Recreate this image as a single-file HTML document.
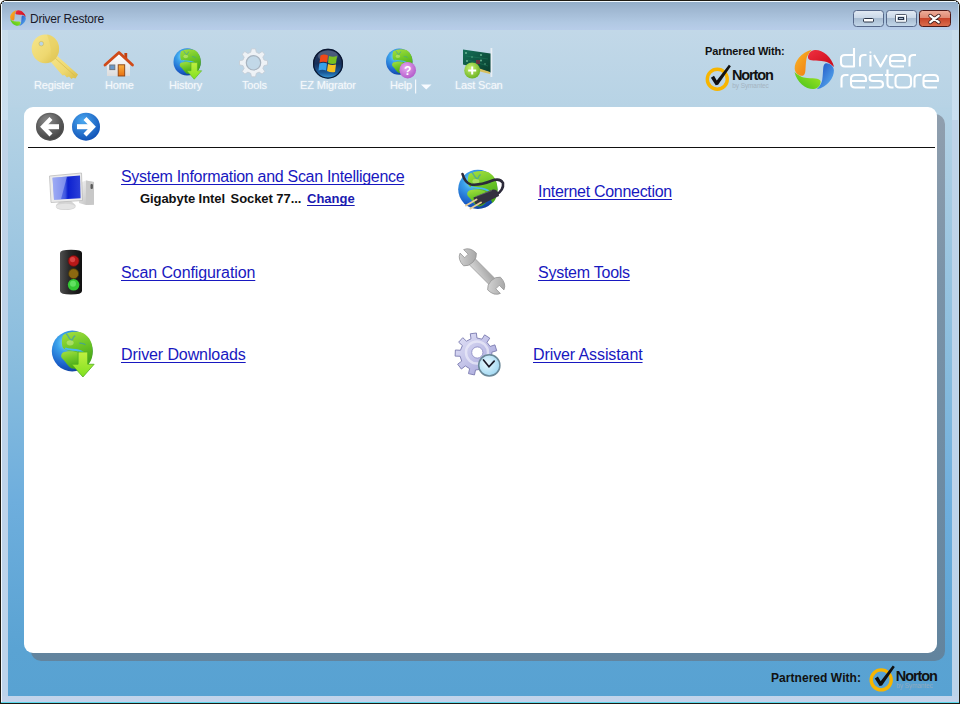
<!DOCTYPE html>
<html><head><meta charset="utf-8">
<style>
*{margin:0;padding:0;box-sizing:border-box}
html,body{width:960px;height:704px;overflow:hidden;background:#fff}
body{position:relative;font-family:"Liberation Sans",sans-serif}
.abs{position:absolute}
#win{position:absolute;left:0;top:0;width:960px;height:704px;background:#1e1a12;border-radius:6px 6px 0 0}
#wtop{position:absolute;left:4px;top:1px;width:952px;height:1px;background:#f2faff}
#wl{position:absolute;left:1px;top:4px;width:1px;height:698px;background:#f0f8fe}
#wr{position:absolute;left:958px;top:4px;width:1px;height:698px;background:#c4dbec}
#wb{position:absolute;left:1px;top:702px;width:958px;height:1px;background:#5ad8ec}
#title{position:absolute;left:2px;top:2px;width:956px;height:28px;background:linear-gradient(#93aec9,#9eb6d0 22%,#b0c8e2 72%,#b8cde9)}
#tool{position:absolute;left:2px;top:30px;width:956px;height:77px;background:linear-gradient(#c2d8e8,#b7d3e5)}
#lower{position:absolute;left:2px;top:107px;width:956px;height:589px;background:linear-gradient(#b6d3e5 0%,#86bbdd 46%,#6eaedd 67%,#5aa3d3 92%,#58a2d2 100%)}
.frameL{position:absolute;left:2px;top:120px;width:6px;height:576px;background:linear-gradient(#bfd3e8,#bcd3ea)}
.frameR{position:absolute;left:952px;top:120px;width:6px;height:576px;background:linear-gradient(#bfd3e8,#bcd3ea)}
.frameTL{position:absolute;left:2px;top:30px;width:6px;height:90px;background:linear-gradient(#c8dcea,#cadff0)}
.frameTR{position:absolute;left:952px;top:30px;width:6px;height:90px;background:linear-gradient(#c8dcea,#cadff0)}
.frameB{position:absolute;left:2px;top:696px;width:956px;height:6px;background:linear-gradient(#c0d4ea,#c4d2ec)}
#panelShadow{position:absolute;left:31px;top:114px;width:914px;height:547px;background:linear-gradient(#909fae,#7a93a8 30%,#62849e);border-radius:10px}
#panel{position:absolute;left:24px;top:107px;width:913px;height:546px;background:#fff;border-radius:9px}
.sep{position:absolute;left:28px;top:147px;width:907px;height:1px;background:#111}
.lbl{position:absolute;font-size:11px;color:#f6f9fc;letter-spacing:-0.15px;white-space:nowrap;text-shadow:0 0 2px rgba(255,255,255,.5)}
.link{position:absolute;font-size:16px;color:#1818c0;text-decoration-color:#1010ee;text-decoration:underline;text-decoration-skip-ink:none;text-underline-offset:2px;text-decoration-thickness:1px;letter-spacing:-0.25px;white-space:nowrap;line-height:18px}
</style></head><body>
<div id="win"></div>
<div id="title"></div>
<div id="wtop"></div><div id="wl"></div><div id="wr"></div><div id="wb"></div>
<div id="tool"></div>
<div id="lower"></div>
<div class="frameL"></div>
<div class="frameR"></div>
<div class="frameB"></div>
<div class="frameTL"></div><div class="frameTR"></div>
<div id="panelShadow"></div>
<div id="panel"></div>
<div class="sep"></div>

<!-- title -->
<div class="abs" style="left:30px;top:12px;font-size:12px;color:#1a1a2a;letter-spacing:-0.25px">Driver Restore</div>

<!-- toolbar labels -->
<div class="lbl" style="left:34px;top:79px">Register</div>
<div class="lbl" style="left:105px;top:79px">Home</div>
<div class="lbl" style="left:169px;top:79px">History</div>
<div class="lbl" style="left:242px;top:79px">Tools</div>
<div class="lbl" style="left:300px;top:79px">EZ Migrator</div>
<div class="lbl" style="left:390px;top:79px">Help</div>
<div class="lbl" style="left:455px;top:79px">Last Scan</div>

<!-- links -->
<div class="link" style="left:121px;top:168px;letter-spacing:-0.3px">System Information and Scan Intelligence</div>
<div class="abs" style="left:140px;top:191px;font-size:13px;font-weight:bold;color:#111;white-space:pre;letter-spacing:-0.07px">Gigabyte Intel<span style="margin-left:5.6px">Socket 77...</span></div>
<div class="abs" style="left:307px;top:191px;font-size:13px;font-weight:bold;color:#1a1ab0;text-decoration:underline;text-decoration-skip-ink:none;text-underline-offset:2px;letter-spacing:0px">Change</div>
<div class="link" style="left:538px;top:183px;letter-spacing:-0.3px">Internet Connection</div>
<div class="link" style="left:121px;top:264px;letter-spacing:-0.1px">Scan Configuration</div>
<div class="link" style="left:538px;top:264px">System Tools</div>
<div class="link" style="left:121px;top:346px;letter-spacing:-0.1px">Driver Downloads</div>
<div class="link" style="left:533px;top:346px;letter-spacing:-0.1px">Driver Assistant</div>

<!-- partnered -->
<div class="abs" style="left:705px;top:45px;font-size:11px;font-weight:bold;color:#111;letter-spacing:-0.15px">Partnered With:</div>
<div class="abs" style="left:771px;top:671px;font-size:12px;font-weight:bold;color:#111;letter-spacing:0.05px">Partnered With:</div>
<svg id="ov" width="960" height="704" viewBox="0 0 960 704" style="position:absolute;left:0;top:0">
<defs>
  <linearGradient id="gRed" x1="0" y1="0" x2="1" y2="1"><stop offset="0" stop-color="#f03040"/><stop offset="1" stop-color="#c80818"/></linearGradient>
  <linearGradient id="gBlue" x1="1" y1="0" x2="0" y2="1"><stop offset="0" stop-color="#60b8f4"/><stop offset="1" stop-color="#1848c0"/></linearGradient>
  <linearGradient id="gGreen" x1="1" y1="0" x2="0" y2="1"><stop offset="0" stop-color="#40c020"/><stop offset="1" stop-color="#a8e820"/></linearGradient>
  <linearGradient id="gOrange" x1="0" y1="1" x2="1" y2="0"><stop offset="0" stop-color="#f07810"/><stop offset="1" stop-color="#f8b828"/></linearGradient>
  <path id="petal" d="M-6.3,-11.5 C-6.5,-16 -3.5,-19.3 0.7,-19.6 C8,-20 17.5,-13 19.8,-2.5 C16,-6 13,-7.5 10.4,-7.9 C6,-8.6 2,-8.6 -1,-8.9 C-3.5,-9.1 -5.5,-9.6 -6.3,-11.5 Z"/>
  <g id="logo">
    <use href="#petal" fill="url(#gRed)"/>
    <use href="#petal" fill="url(#gBlue)" transform="rotate(90)"/>
    <use href="#petal" fill="url(#gGreen)" transform="rotate(180)"/>
    <use href="#petal" fill="url(#gOrange)" transform="rotate(270)"/>
  </g>
  <radialGradient id="gOcean" cx="0.35" cy="0.3" r="0.75"><stop offset="0" stop-color="#80e0ff"/><stop offset="0.3" stop-color="#3aa0ea"/><stop offset="0.75" stop-color="#1a5ec8"/><stop offset="1" stop-color="#10409a"/></radialGradient>
  <linearGradient id="gLand" x1="0" y1="0" x2="0.3" y2="1"><stop offset="0" stop-color="#a8e040"/><stop offset="0.5" stop-color="#70c828"/><stop offset="1" stop-color="#48a818"/></linearGradient>
  <g id="globe">
    <circle cx="20" cy="20" r="20" fill="url(#gOcean)"/>
    <path d="M11,4.5 C15,1.5 24,0 31,2.5 C37,6 40,12 40.2,20 C40,26 38.5,31 35,34 L31,26 C28,22 24,21 20,20.5 C16,20 13,18.5 11,17 C9.5,14 9.5,8 11,4.5 Z" fill="url(#gLand)"/>
    <path d="M12,21 C16,19.5 23,20 27,22 C30,24 31,28 29,32 C27,36 23,38.5 19,37 C16,35 14,31 11,28 C8,26 9,22 12,21 Z" fill="url(#gLand)"/>
    <path d="M14,3 C17,5 16,8 19,9 C21,10 20,6 23,5" stroke="#2a88d8" stroke-width="1.4" fill="none" opacity="0.55"/>
    <path d="M27,12 C29,13 31,12 33,14" stroke="#2a88d8" stroke-width="1.2" fill="none" opacity="0.5"/>
    <path d="M13,17.5 C17,19 22,18.5 26,19.5 C28,20 30,21 31,21.5" stroke="#48b8f0" stroke-width="1.8" fill="none"/>
    <ellipse cx="18" cy="12" rx="3.5" ry="2.5" fill="#f8ffc0" opacity="0.35"/>
  </g>
  <linearGradient id="gArrow" x1="0" y1="0" x2="0" y2="1"><stop offset="0" stop-color="#c0f040"/><stop offset="1" stop-color="#80e020"/></linearGradient>
  <path id="dlArrow" d="M25.8,21 L35.2,21 L35.2,33 L41.5,33 L30.5,45.5 L19.5,33 L25.8,33 Z" fill="url(#gArrow)" stroke="#50b020" stroke-width="0.8"/>
  <g id="norton">
    <circle cx="0" cy="0" r="10" fill="none" stroke="#f7b500" stroke-width="3.4"/>
    <path d="M-6.4,-1.4 L-3.3,-3.4 L-0.5,1.4 L11.6,-14.4 L13.6,-13 L0.8,5.6 L-1.6,6 Z" fill="#111"/>
    <text x="14.6" y="0.8" font-family="Liberation Sans" font-weight="bold" font-size="14.5" letter-spacing="-1.1" fill="#111">Norton</text>
    <text x="15" y="8.6" font-family="Liberation Sans" font-size="6.5" letter-spacing="-0.1" fill="#a0acb8" opacity="0.8">by Symantec</text>
  </g>
  <linearGradient id="gBtnB" x1="0" y1="0" x2="0" y2="1"><stop offset="0" stop-color="#e2eaf4"/><stop offset="0.45" stop-color="#cad8e8"/><stop offset="0.5" stop-color="#a8bcd2"/><stop offset="1" stop-color="#c4d8ea"/></linearGradient>
  <linearGradient id="gBtnR" x1="0" y1="0" x2="0" y2="1"><stop offset="0" stop-color="#eeae9c"/><stop offset="0.45" stop-color="#e08a74"/><stop offset="0.5" stop-color="#c8442a"/><stop offset="1" stop-color="#dc7050"/></linearGradient>
  <radialGradient id="gBack" cx="0.4" cy="0.3" r="0.8"><stop offset="0" stop-color="#8a8a8a"/><stop offset="1" stop-color="#363636"/></radialGradient>
  <radialGradient id="gFwd" cx="0.4" cy="0.3" r="0.8"><stop offset="0" stop-color="#4aa8f0"/><stop offset="1" stop-color="#0a48b0"/></radialGradient>
</defs>

<!-- title icon -->
<g transform="translate(18,18) scale(0.4)"><use href="#logo"/></g>

<!-- window buttons -->
<rect x="853.5" y="10.5" width="30" height="16" rx="3" fill="url(#gBtnB)" stroke="#56688a"/>
<rect x="886.5" y="10.5" width="30" height="16" rx="3" fill="url(#gBtnB)" stroke="#56688a"/>
<rect x="919.5" y="10.5" width="31" height="16" rx="3" fill="url(#gBtnR)" stroke="#4c1818"/>
<rect x="863.5" y="18.5" width="10" height="3.5" rx="1" fill="#fff" stroke="#2a3448"/>
<rect x="895.5" y="14.5" width="11" height="7.5" rx="1" fill="none" stroke="#2a3448" stroke-width="1"/>
<rect x="896.5" y="15.5" width="9" height="5.5" fill="none" stroke="#fff" stroke-width="1.4"/>
<rect x="898.5" y="17.5" width="5" height="2" fill="none" stroke="#2a3448" stroke-width="1"/>
<path d="M930.3,15.8 L938.7,22.2 M938.7,15.8 L930.3,22.2" stroke="#3a1a1a" stroke-width="3.9" stroke-linecap="round"/>
<path d="M930.3,15.8 L938.7,22.2 M938.7,15.8 L930.3,22.2" stroke="#fff" stroke-width="2.3" stroke-linecap="round"/>

<!-- big logo -->
<g transform="translate(814.3,69.5)"><use href="#logo"/></g>
<g fill="none" stroke="#fff" stroke-width="2.1" stroke-linejoin="round" stroke-linecap="butt">
  <!-- driver -->
  <path d="M854,48 V66.5 H845 Q841,66.5 841,62.5 V58.5 Q841,55 845,55 H854"/>
  <path d="M860,66.5 V59 Q860,55 864,55 H866.5"/>
  <path d="M870.5,55 V66.5"/>
  <path d="M874,55 L880.5,66.5 L887,55"/>
  <path d="M890,61 H905 V59 Q905,55 901,55 H894 Q890,55 890,59 V62.5 Q890,66.5 894,66.5 H904"/>
  <path d="M909.5,66.5 V59 Q909.5,55 913.5,55 H916"/>
  <!-- restore -->
  <path d="M841.5,87.5 V79 Q841.5,75 845.5,75 H848.5"/>
  <path d="M851,81 H866 V79 Q866,75 862,75 H855 Q851,75 851,79 V83.5 Q851,87.5 855,87.5 H865"/>
  <path d="M883,75 H873 Q869.5,75 869.5,78 Q869.5,81 873,81 H879.5 Q883,81 883,84.2 Q883,87.5 879.5,87.5 H869"/>
  <path d="M887.5,69.5 V83.5 Q887.5,87.5 891.5,87.5 H893.5 M885,75 H893.5"/>
  <path d="M899.5,75 H907 Q911,75 911,79 V83.5 Q911,87.5 907,87.5 H899.5 Q895.5,87.5 895.5,83.5 V79 Q895.5,75 899.5,75 Z"/>
  <path d="M914.5,87.5 V79 Q914.5,75 918.5,75 H921.5"/>
  <path d="M923.5,81 H938 V79 Q938,75 934,75 H927.5 Q923.5,75 923.5,79 V83.5 Q923.5,87.5 927.5,87.5 H937"/>
</g>
<circle cx="870.4" cy="52.3" r="1.1" fill="#fff" opacity="0.85"/>

<!-- nortons -->
<g transform="translate(717.3,79.2)"><use href="#norton"/></g>
<g transform="translate(881.2,679.9)"><use href="#norton"/></g>

<!-- nav buttons -->
<circle cx="50" cy="126.7" r="14" fill="url(#gBack)"/>
<circle cx="50" cy="126.7" r="13.2" fill="none" stroke="#5a5a5a" stroke-width="1" opacity="0.6"/>
<path d="M51,118.5 L43,126.7 L51,135" fill="none" stroke="#fff" stroke-width="4.2" stroke-linejoin="miter"/>
<rect x="44" y="124.2" width="15" height="5" fill="#fff"/>
<circle cx="86" cy="126.7" r="14" fill="url(#gFwd)"/>
<path d="M85,118.5 L93,126.7 L85,135" fill="none" stroke="#fff" stroke-width="4.2" stroke-linejoin="miter"/>
<rect x="77" y="124.2" width="15" height="5" fill="#fff"/>
</svg>

<svg id="ov2" width="960" height="704" viewBox="0 0 960 704" style="position:absolute;left:0;top:0">
<defs>
  <linearGradient id="gKey" x1="0" y1="0" x2="1" y2="1"><stop offset="0" stop-color="#f6e68c"/><stop offset="0.6" stop-color="#eed870"/><stop offset="1" stop-color="#d8bc48"/></linearGradient>
  <linearGradient id="gDoor" x1="0" y1="0" x2="0" y2="1"><stop offset="0" stop-color="#f8b040"/><stop offset="1" stop-color="#e87010"/></linearGradient>
  <linearGradient id="gHouse" x1="0" y1="0" x2="0" y2="1"><stop offset="0" stop-color="#ffffff"/><stop offset="1" stop-color="#dcdcdc"/></linearGradient>
  <linearGradient id="gOrb" x1="0" y1="0" x2="0" y2="1"><stop offset="0" stop-color="#2a3a60"/><stop offset="0.5" stop-color="#16305a"/><stop offset="0.8" stop-color="#1c5a98"/><stop offset="1" stop-color="#3aa0e0"/></linearGradient>
  <radialGradient id="gPurple" cx="0.4" cy="0.35" r="0.7"><stop offset="0" stop-color="#e8a8f0"/><stop offset="1" stop-color="#b058c8"/></radialGradient>
  <radialGradient id="gPlus" cx="0.4" cy="0.35" r="0.7"><stop offset="0" stop-color="#c8f070"/><stop offset="1" stop-color="#68b020"/></radialGradient>
  <linearGradient id="gPcb" x1="0" y1="0" x2="1" y2="1"><stop offset="0" stop-color="#157058"/><stop offset="1" stop-color="#083c2c"/></linearGradient>
  <linearGradient id="gScreen" x1="0" y1="0" x2="1" y2="0"><stop offset="0" stop-color="#8898f0"/><stop offset="0.45" stop-color="#4058e0"/><stop offset="0.55" stop-color="#0c20d0"/><stop offset="1" stop-color="#2c40d8"/></linearGradient>
  <linearGradient id="gSilver" x1="0" y1="0" x2="1" y2="1"><stop offset="0" stop-color="#f4f4f4"/><stop offset="1" stop-color="#b8b8b8"/></linearGradient>
  <linearGradient id="gTL" x1="0" y1="0" x2="1" y2="0"><stop offset="0" stop-color="#505050"/><stop offset="0.4" stop-color="#2a2a2a"/><stop offset="1" stop-color="#101010"/></linearGradient>
  <linearGradient id="gWrench" x1="0" y1="0" x2="1" y2="1"><stop offset="0" stop-color="#d8d8d8"/><stop offset="1" stop-color="#a0a0a0"/></linearGradient>
  <linearGradient id="gGearP" x1="0" y1="0" x2="1" y2="1"><stop offset="0" stop-color="#e4e4f8"/><stop offset="1" stop-color="#a0a0d8"/></linearGradient>
  <radialGradient id="gClock" cx="0.4" cy="0.4" r="0.7"><stop offset="0" stop-color="#e8f8ff"/><stop offset="1" stop-color="#98d4f0"/></radialGradient>
</defs>

<!-- Register key -->
<g>
  <path d="M54.5,53.5 L78,74.5 L75.5,78.5 L73,77.8 L71.5,79 L69,76.5 L67,77.5 L64.5,75 L62.5,75.5 L50,61 Z" fill="url(#gKey)"/>
  <path d="M55,58 L74.5,75.5" stroke="#d4b848" stroke-width="0.9" opacity="0.7"/>
  <ellipse cx="45.4" cy="48.8" rx="13.7" ry="14.4" fill="url(#gKey)"/>
  <path d="M47,34.5 A13.7,14.4 0 0 1 58.8,50 A13.7,14.4 0 0 1 50,62.5 Q53,50 47,34.5 Z" fill="#e4cc5c" opacity="0.45"/>
  <circle cx="41.3" cy="43.7" r="2.3" fill="#b8d4e6" stroke="#d0b850" stroke-width="0.6"/>
</g>
<!-- Home -->
<path d="M107,65 L119,54 L130,65 L130,76 L107,76 Z" fill="url(#gHouse)"/>
<rect x="124.4" y="53" width="2.8" height="6" fill="#c04010"/>
<path d="M105,65 L119,52.5 L132.5,65" fill="none" stroke="#d04a18" stroke-width="2.8" stroke-linecap="round" stroke-linejoin="round"/>
<rect x="109.8" y="65" width="5" height="4.6" fill="#6a98c8" stroke="#707880" stroke-width="1"/>
<rect x="118.2" y="64.8" width="6.5" height="11.2" fill="url(#gDoor)" stroke="#8a4010" stroke-width="0.9"/>

<!-- History globe -->
<g transform="translate(173.5,48.3) scale(0.68)"><use href="#globe"/><use href="#dlArrow"/></g>

<!-- Tools gear (pale) -->
<g transform="translate(253.5,62.8)">
  <path id="gear12" d="M-2,-14 L2,-14 L2.8,-10.5 L5.6,-9.3 L8.6,-11.3 L11.3,-8.6 L9.3,-5.6 L10.5,-2.8 L14,-2 L14,2 L10.5,2.8 L9.3,5.6 L11.3,8.6 L8.6,11.3 L5.6,9.3 L2.8,10.5 L2,14 L-2,14 L-2.8,10.5 L-5.6,9.3 L-8.6,11.3 L-11.3,8.6 L-9.3,5.6 L-10.5,2.8 L-14,2 L-14,-2 L-10.5,-2.8 L-9.3,-5.6 L-11.3,-8.6 L-8.6,-11.3 L-5.6,-9.3 L-2.8,-10.5 Z" fill="#eef2f6" stroke="#c4ccd4" stroke-width="0.8"/>
  <circle r="7.2" fill="#c2d8e8" stroke="#a8b4c0" stroke-width="1.2"/>
</g>

<!-- EZ Migrator orb -->
<circle cx="328" cy="63.7" r="15" fill="url(#gOrb)"/>
<circle cx="328" cy="63.7" r="14.4" fill="none" stroke="#0c1830" stroke-width="1.2"/>
<ellipse cx="328" cy="56" rx="10" ry="5.5" fill="#fff" opacity="0.18"/>
<path d="M320.5,55.5 Q324,53.5 328,55.5 L327,62.5 Q323.5,61 319.5,62.5 Z" fill="#f04818"/>
<path d="M329,56 Q333,57.5 337,56 L336,63.5 Q332,64.5 328,63 Z" fill="#7ac020"/>
<path d="M319.3,63.5 Q323.3,62 327,63.5 L326,70.5 Q322.5,69 318.5,70.5 Z" fill="#38a0e8"/>
<path d="M328,64 Q332,65.5 336,64.5 L335,72 Q331,73 327,71 Z" fill="#f8c020"/>

<!-- Help -->
<g transform="translate(386,48.4) scale(0.66)"><use href="#globe"/></g>
<circle cx="407.7" cy="70.2" r="8.3" fill="url(#gPurple)"/>
<text x="407.7" y="75" text-anchor="middle" font-family="Liberation Sans" font-weight="bold" font-size="12" fill="#fff">?</text>
<rect x="415" y="79.5" width="1.2" height="14" fill="#f4f8fc"/>
<path d="M421,84.5 L431.5,84.5 L426.2,89.5 Z" fill="#f8fbff"/>

<!-- Last Scan card -->
<rect x="490.5" y="48" width="1.8" height="29" fill="#e8eef4"/>
<path d="M463,49.5 L490.5,53.5 L490.5,72.5 L463,64.5 Z" fill="url(#gPcb)"/>
<g fill="#8ad8b0" opacity="0.8"><circle cx="466" cy="53" r="0.9"/><circle cx="481" cy="55" r="0.9"/><circle cx="481" cy="60.5" r="0.9"/><circle cx="467" cy="61" r="0.9"/><circle cx="485" cy="64" r="0.7"/><circle cx="472" cy="57" r="0.7"/></g><path d="M466,56 L488,59 M468,60 L488,66" stroke="#2a9870" stroke-width="0.5" opacity="0.6"/>
<rect x="476" y="60" width="4" height="4" fill="#6a3040"/>
<path d="M478,68 L490,72 L490,74 L478,71 Z" fill="#d8c060"/>
<circle cx="472.2" cy="70.5" r="8" fill="url(#gPlus)"/>
<path d="M472.2,66.5 V74.5 M468.2,70.5 H476.2" stroke="#fff" stroke-width="2"/>

<!-- Monitor -->
<path d="M79,183 L86,180.5 L94,182 L94,204.5 L86,205 L79,203 Z" fill="url(#gSilver)"/>
<path d="M86,180.5 L94,182 L94,204.5 L86,205 Z" fill="#c8c8c8"/>
<rect x="90.5" y="184" width="2.4" height="5" rx="1" fill="#5a5a5a"/>
<path d="M56,205 Q54,210 65,210 Q77,210 75.5,205 L71,201 L60,201 Z" fill="#d4d4d4"/>
<ellipse cx="65.5" cy="206.5" rx="9.5" ry="2.8" fill="#e4e4e4"/>
<path d="M49.5,176 L81.5,173 L82.5,200.5 L51,202.5 Z" fill="#ebebeb" stroke="#bcbcbc" stroke-width="0.8"/>
<path d="M52.5,177.8 L80,175.5 L80.6,198.2 L54,199.8 Z" fill="url(#gScreen)"/>
<path d="M52.5,177.8 L67,176.6 L61,199.3 L54,199.8 Z" fill="#b0bcf8" opacity="0.55"/>
<!-- Traffic light -->
<path d="M60,253 Q60,249.8 71,249.8 Q82,249.8 82,253 L82,291 Q82,294.6 71,294.6 Q60,294.6 60,291 Z" fill="url(#gTL)"/>
<circle cx="73.6" cy="260.9" r="5.5" fill="#b81818" stroke="#601010" stroke-width="0.8"/>
<circle cx="72.6" cy="259.6" r="2.6" fill="#f06060" opacity="0.6"/>
<circle cx="73.6" cy="273.7" r="5" fill="#8c6810" stroke="#4a3808" stroke-width="0.8"/>
<circle cx="73.6" cy="284.8" r="5.8" fill="#34c834"/>
<circle cx="73" cy="283.8" r="3" fill="#80f080" opacity="0.6"/>

<!-- Driver Downloads globe -->
<g transform="translate(51.8,330.6) scale(1.02)"><use href="#globe"/><use href="#dlArrow"/></g>

<!-- Internet globe with plug -->
<g transform="translate(458.2,169.7) scale(0.98)"><use href="#globe"/></g>
<path d="M462.5,174 Q465,183 471,184.5 Q480,185.5 491,181 Q500,177.5 503,183 Q504,190 496,195" fill="none" stroke="#2c2a3a" stroke-width="2.6" stroke-linecap="round"/>
<path d="M473.5,197.5 L493,189.5 Q497,189 498.5,193.5 L499,196 L480.5,205 Q476,206 474.5,202 Z" fill="#34323f"/>
<path d="M476,196.5 L492,190.5" stroke="#6a6878" stroke-width="1" opacity="0.7"/>
<path d="M466,205.5 L476.5,199.5 M470.5,208.5 L481,202.5" stroke="#e6cc98" stroke-width="2" stroke-linecap="round"/>
<!-- Wrench -->
<g transform="translate(482,271.5) rotate(-45)">
  <rect x="-4.2" y="-15" width="8.4" height="30" fill="url(#gWrench)" stroke="#909090" stroke-width="0.7"/>
  <path d="M-9,-17 Q-9,-26 -2.5,-28.5 L-2.5,-22 L2.5,-22 L2.5,-28.5 Q9,-26 9,-17 Q6,-13 0,-13 Q-6,-13 -9,-17 Z" fill="url(#gWrench)" stroke="#909090" stroke-width="0.7"/>
  <path d="M-9,17 Q-9,26 -2.5,28.5 L-2.5,22 L2.5,22 L2.5,28.5 Q9,26 9,17 Q6,13 0,13 Q-6,13 -9,17 Z" fill="url(#gWrench)" stroke="#909090" stroke-width="0.7"/>
</g>

<!-- Gear with clock -->
<g transform="translate(476,354)">
  <path d="M-5.00,-15.20 L-5.72,-20.21 L0.37,-21.00 L0.95,-15.97 L5.94,-14.86 L8.61,-19.15 L13.78,-15.85 L10.99,-11.63 L14.10,-7.56 L18.91,-9.14 L20.74,-3.29 L15.89,-1.84 L15.66,3.27 L20.36,5.15 L18.00,10.81 L13.36,8.81 L9.90,12.57 L12.28,17.03 L6.84,19.86 L4.57,15.33 L-0.50,15.99 L-1.54,20.94 L-7.52,19.61 L-6.35,14.68 L-10.66,11.93 L-14.64,15.06 L-18.37,10.18 L-14.31,7.16 L-15.84,2.28 L-20.89,2.12 L-20.61,-4.01 L-15.56,-3.71 L-13.60,-8.43 L-17.37,-11.80 L-13.22,-16.32 L-9.54,-12.84 Z" fill="url(#gGearP)" stroke="#7a7ab0" stroke-width="0.9" stroke-linejoin="round"/>
  <circle cx="1" cy="-1.5" r="11" fill="none" stroke="#ececfa" stroke-width="2.5" opacity="0.7"/>
  <circle cx="1.3" cy="-1.5" r="5.6" fill="#fff" stroke="#8888c0" stroke-width="0.8"/>
</g>
<circle cx="489.3" cy="365.4" r="10.6" fill="url(#gClock)" stroke="#6a8898" stroke-width="1.5"/>
<path d="M483.5,360 L489,366.8 L494.2,361.2" fill="none" stroke="#1a1a28" stroke-width="1.7" stroke-linecap="round"/>
</svg>

</body></html>
